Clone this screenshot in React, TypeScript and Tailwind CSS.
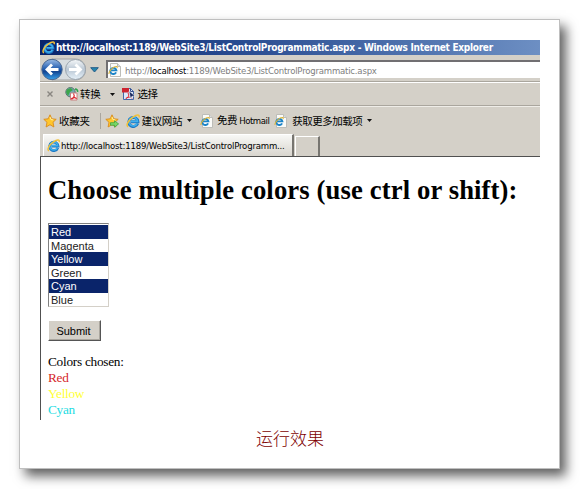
import type { ReactNode } from "react";

const UI = "font-['DejaVu_Sans_Condensed','Noto_Sans_CJK_SC',sans-serif]";
const CJK = "font-['Noto_Sans_CJK_SC',sans-serif]";

function IeGlyph({ size = 14 }: { size?: number }) {
  return (
    <svg width={size} height={size} viewBox="0 0 16 16" className="block shrink-0">
      <path d="M13.3 10.9A5.2 5.2 0 1 1 13.6 8.8H5.5" fill="none" stroke="#1c78c4" strokeWidth="3.4" />
      <path d="M12.8 10.7A4.9 4.9 0 1 1 13.2 8.4H5.5" fill="none" stroke="#3fb0ec" strokeWidth="1.8" />
      <path d="M2.3 14.8C-.8 12.5 3.6 6.5 8 3.5 11.8.8 16.3-.2 14.8 4" fill="none" stroke="#f1c13b" strokeWidth="1.8" />
    </svg>
  );
}

function PageIcon() {
  return (
    <svg width="14" height="14" viewBox="0 0 14 14" className="block shrink-0">
      <path d="M2.5.5h7l3 3v10h-10z" fill="#fbfbf8" stroke="#bdbdb8" />
      <path d="M9.5.5v3h3" fill="#ddd" stroke="#bdbdb8" />
      <path d="M8.1 9.4A3.1 3.1 0 1 1 8.4 7.4H3" fill="none" stroke="#1c84c8" strokeWidth="1.9" />
      <path d="M.9 11C.5 9 3.5 5.5 6.2 4.1c2-1 3.6-.6 2.8.8" fill="none" stroke="#e0b638" strokeWidth="1.1" />
    </svg>
  );
}

function Star({ add = false }: { add?: boolean }) {
  return (
    <svg width="14" height="14" viewBox="0 0 14 14" className="block shrink-0">
      <path d="m7 .8 1.8 4 4.4.5-3.2 3 .9 4.7L7 10.7 3.1 13 4 8.3.8 5.3l4.4-.5z" fill="#ffc62c" stroke="#d98a1c" strokeWidth=".9" />
      <path d="m7 3 1 2.6 2.3.3" fill="none" stroke="#fff1a0" />
      {add && <path d="M5.5 8.7h4V6.8l4.1 3.1-4.1 3.3v-2h-4z" fill="#7bd765" stroke="#3ba344" strokeWidth=".8" />}
    </svg>
  );
}

function NavButtons() {
  return (
    <svg width="48" height="24" viewBox="0 0 48 24" className="block shrink-0">
      <defs>
        <linearGradient id="back" x2="0" y2="1">
          <stop stopColor="#9bbbe5" />
          <stop offset=".45" stopColor="#2861b1" />
          <stop offset=".6" stopColor="#134591" />
          <stop offset="1" stopColor="#36a2ed" />
        </linearGradient>
        <linearGradient id="forward" x2="0" y2="1">
          <stop stopColor="#f6f8f9" />
          <stop offset=".5" stopColor="#bac7d4" />
          <stop offset="1" stopColor="#e7f2fa" />
        </linearGradient>
      </defs>
      <path d="M12 1h23c14 0 14 21 0 21H12" fill="#d8dde0" stroke="#a2a3a3" />
      <circle cx="12" cy="11.5" r="10.2" fill="url(#back)" stroke="#496791" />
      <circle cx="35.5" cy="11.5" r="10" fill="url(#forward)" stroke="#9aa4ad" />
      <path d="M18.5 11.5H7m5-5-5 5 5 5" fill="none" stroke="white" strokeWidth="2.8" />
      <path d="M29 11.5h11.5m-5-5 5 5-5 5" fill="none" stroke="white" strokeWidth="2.8" />
    </svg>
  );
}

function Arrow({ className = "" }: { className?: string }) {
  return <svg width="5" height="3" viewBox="0 0 5 3" className={`block ${className}`}><path d="M0 0h5L2.5 3z" fill="#111" /></svg>;
}

function Label({ children, className = "" }: { children: ReactNode; className?: string }) {
  return <span className={`${CJK} whitespace-nowrap text-[10.5px] leading-[14px] text-black ${className}`}>{children}</span>;
}

const options = [
  { name: "Red", selected: true },
  { name: "Magenta", selected: false },
  { name: "Yellow", selected: true },
  { name: "Green", selected: false },
  { name: "Cyan", selected: true },
  { name: "Blue", selected: false },
];

export default function App() {
  return (
    <div className="h-[489px] w-[580px] overflow-hidden bg-white pt-[19px] pl-[19px]">
      <div className="h-[450px] w-[541px] border border-[#bfbfbf] bg-white pt-5 pl-5 shadow-[6px_7px_11px_#606060]">
        <div className="h-[380px] w-[500px] overflow-hidden">
          <div className="flex h-[15px] items-center bg-linear-to-r from-[#0a246a] via-[#294c91] via-40% to-[#6d8fc3] pl-[2px]">
            <IeGlyph size={13} />
            <span className={`${UI} ml-[1px] whitespace-nowrap text-[10px] leading-[15px] font-bold tracking-[-0.285px] text-white`}>
              http://localhost:1189/WebSite3/ListControlProgrammatic.aspx - Windows Internet Explorer
            </span>
          </div>

          <div className="flex h-[27px] border-b border-[#aaa69e] bg-[#d4d0c8] pt-[3px]">
            <NavButtons />
            <svg width="9" height="6" viewBox="0 0 9 6" className="mt-[9px] ml-[2px]"><path d="M.7.7h7.6L4.5 5z" fill="#2588af" stroke="#245c88" /></svg>
            <div className="mt-[2px] ml-[7px] flex h-[18px] flex-1 items-center border-t-2 border-l-2 border-[#716f72] bg-white">
              <PageIcon />
              <span className={`${UI} ml-[3px] whitespace-nowrap text-[9.5px] leading-[15px] tracking-[-0.21px] text-[#808080]`}>
                http://<span className="text-black">localhost</span>:1189/WebSite3/ListControlProgrammatic.aspx
              </span>
            </div>
          </div>

          <div className="flex h-[24px] items-center border-t border-b border-t-white border-b-[#aaa69e] bg-[#d4d0c8] pl-[7px]">
            <svg width="6" height="6" viewBox="0 0 6 6"><path d="m.5.5 5 5m0-5-5 5" stroke="#898681" strokeWidth="1.4" /></svg>
            <svg width="14" height="14" viewBox="0 0 14 14" className="ml-[12px]">
              <circle cx="5.5" cy="5.2" r="4.7" fill="#74a9b0" stroke="#5c7470" />
              <path d="M2 2.5 5.5 1 8 3 5 5 3 9 1 5z" fill="#3aa64c" />
              <path d="M5.5 6h6.5v7H5.5z" fill="#fff" stroke="#c98080" />
              <path d="M8.5 6.5c2 3-1 5.5-2 5.5s4-3 5 0" fill="none" stroke="#dc2730" strokeWidth="1.1" />
              <path d="M10 2c2 0 3 1.5 2.5 3" fill="none" stroke="#2ca24c" strokeWidth="1.6" />
            </svg>
            <Label className="ml-[1px] tracking-[-0.3px]">转换</Label>
            <Arrow className="ml-[10px]" />
            <svg width="14" height="14" viewBox="0 0 14 14" className="ml-[7px]">
              <path d="M1.5 1.5h7l3 3v8h-10z" fill="#dce9fa" stroke="#4568a8" />
              <path d="M0 1h7v4.5H0z" fill="#cd2430" />
              <path d="M8.5 1.5v3h3" fill="none" stroke="#354c8b" />
              <path d="M6 6c2 3-1 5.5-2 5.5s4-3 6 0" fill="none" stroke="#dc2730" />
              <path d="m7 4 6 5-3 .3-1.5 2z" fill="#17275e" stroke="white" strokeWidth=".5" />
            </svg>
            <Label className="ml-[1px] tracking-[-0.3px]">选择</Label>
          </div>

          <div className="flex h-[28px] items-center border-t border-t-[#efede8] bg-[#d4d0c8] pl-[3px]">
            <Star />
            <Label className="ml-[2px] tracking-[-0.3px]">收藏夹</Label>
            <span className="ml-[10px] h-[16px] w-px bg-[#aaa69e]" />
            <span className="ml-[4px]"><Star add /></span>
            <span className="ml-[7px]"><IeGlyph /></span>
            <Label className="ml-[2px] tracking-[-0.4px]">建议网站</Label>
            <Arrow className="ml-[5px]" />
            <span className="ml-[8px]"><PageIcon /></span>
            <Label className="ml-[3px] tracking-[-0.4px]">免费 <span className={`${UI} text-[9.5px] tracking-[-0.45px]`}>Hotmail</span></Label>
            <span className="ml-[5px]"><PageIcon /></span>
            <Label className="ml-[4px] tracking-[-0.5px]">获取更多加载项</Label>
            <Arrow className="ml-[5px]" />
          </div>

          <div className="flex h-[23px] items-end border-b border-[#505050] bg-[#d4d0c8] pl-[3px]">
            <div className="flex h-[22px] w-[251px] items-center border-t border-r-2 border-l border-t-white border-r-[#777570] border-l-white bg-linear-to-b from-[#f8f8f6] to-[#d8d5ce] pl-[3px]">
              <IeGlyph size={13} />
              <span className={`${UI} ml-[1px] whitespace-nowrap text-[9.5px] leading-[20px] tracking-[-0.19px] text-black`}>http://localhost:1189/WebSite3/ListControlProgramm...</span>
            </div>
            <div className="ml-[1px] h-[20px] w-[25px] border-t border-r-2 border-l border-t-white border-r-[#777570] border-l-white" />
          </div>

          <div className="h-[263px] border-l border-[#505050] bg-white pl-[7px] font-['Liberation_Serif',serif] text-black">
            <h1 className="pt-[18px] text-[26.67px] leading-[31px] font-bold tracking-[0.12px] whitespace-nowrap">Choose multiple colors (use ctrl or shift):</h1>
            <div className="mt-[17px] h-[84px] w-[61px] border border-t-[#808080] border-r-[#d4d0c8] border-b-[#d4d0c8] border-l-[#808080] pt-px font-['Liberation_Sans',sans-serif] text-[11px] leading-[14px]">
              {options.map(({ name, selected }) => (
                <div key={name} className={`h-[13.5px] pl-[2px] ${selected ? "bg-[#0a246a] text-white" : "bg-white text-[#222]"}`}>{name}</div>
              ))}
            </div>
            <button className="mt-[13px] block h-[21px] w-[53px] border border-t-white border-r-[#555] border-b-[#555] border-l-white bg-[#d4d0c8] pr-[2px] font-['Liberation_Sans',sans-serif] text-[11px] leading-[18px] shadow-[inset_-1px_-1px_#aaa69e]">Submit</button>
            <div className="mt-[13px] text-[13.3px] leading-[16px] tracking-[-0.27px]">
              <div>Colors chosen:</div>
              <div className="text-[#d51f2a]">Red</div>
              <div className="text-[#ffff38]">Yellow</div>
              <div className="text-[#23dce2]">Cyan</div>
            </div>
          </div>
        </div>
        <div className={`mt-[7px] ml-[216px] ${CJK} text-[17px] leading-[22px] font-light text-[#800000]`}>运行效果</div>
      </div>
    </div>
  );
}
